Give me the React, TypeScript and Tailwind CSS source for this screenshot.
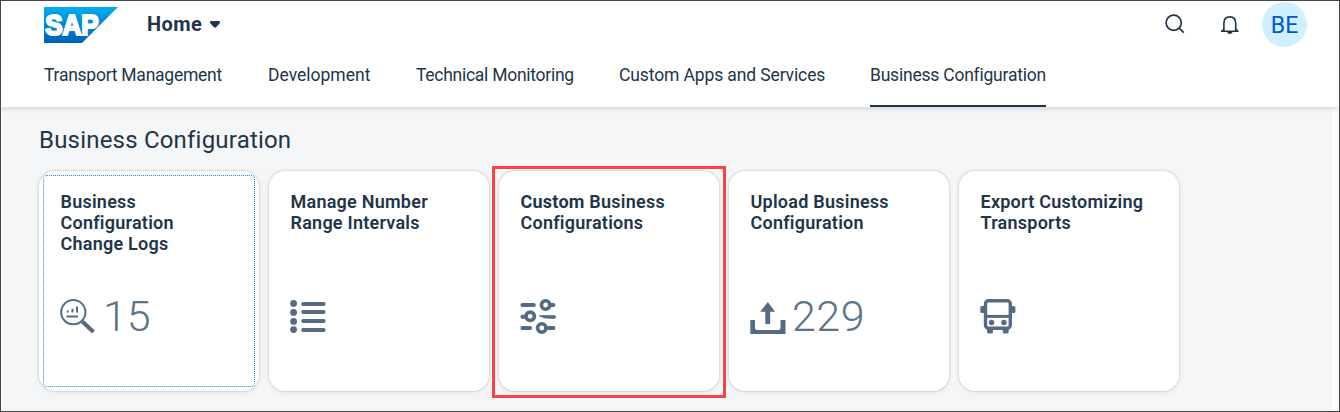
import type { ReactNode } from "react";

const tabs = [
  { label: "Transport Management", box: "w-[224px] tracking-[-0.25px]" },
  { label: "Development", box: "w-[148px] tracking-[0px]" },
  { label: "Technical Monitoring", box: "w-[203px] tracking-[-0.27px]" },
  { label: "Custom Apps and Services", box: "w-[251px] tracking-[-0.12px]" },
];

function SapLogo() {
  return (
    <svg width="74" height="37" viewBox="0 0 74 37" className="block">
      <defs>
        <linearGradient id="sap" x1="0" y1="0" x2="0" y2="1">
          <stop offset="0" stopColor="#00aeef" />
          <stop offset="0.5" stopColor="#0086d2" />
          <stop offset="1" stopColor="#0060b4" />
        </linearGradient>
      </defs>
      <path d="M0 0H74L38 36H0Z" fill="url(#sap)" />
      <text
        x="1.2"
        y="28.4"
        textLength="53.5"
        lengthAdjust="spacingAndGlyphs"
        fontFamily="Liberation Sans, sans-serif"
        fontWeight="700"
        fontSize="29.5"
        fill="#fff"
        stroke="#fff"
        strokeWidth="2.2"
      >
        SAP
      </text>
    </svg>
  );
}

function LogsIcon() {
  return (
    <svg width="36" height="36" viewBox="0 0 36 36" fill="none" stroke="#556b82" className="block">
      <circle cx="13.3" cy="13.2" r="12.1" strokeWidth="2" />
      <path d="M22.3 22.5L33.5 33" strokeWidth="4" />
      <path d="M6.5 17.4H18M7.8 13.6V11.5M12.5 13.6V9.8M17 13.6V7.5" strokeWidth="2" />
    </svg>
  );
}

function ListIcon() {
  return (
    <svg width="36" height="36" viewBox="0 0 36 36" fill="#556b82" className="block">
      {[4.4, 13.4, 22.4, 30.6].map((y) => (
        <circle key={y} cx="3.6" cy={y} r="3.4" />
      ))}
      {[4.9, 13, 21.9, 30.9].map((y) => (
        <rect key={y} x="11.2" y={y - 2} width="24.4" height="4" rx="2" />
      ))}
    </svg>
  );
}

function SlidersIcon() {
  return (
    <svg width="36" height="36" viewBox="0 0 36 36" fill="none" stroke="#556b82" strokeWidth="4" strokeLinecap="round" className="block">
      <path d="M2.4 6H13.8M30 6H33.4M2.4 17.7H5M2.4 29H10M27 29H33.4" />
      <path d="M20 16.6H34.2A1 1 0 0 1 34.2 19.4L25 19L20 17.3Z" fill="#556b82" strokeWidth="0.8" />
      <circle cx="25.6" cy="6" r="4.2" strokeWidth="3.6" />
      <circle cx="10.2" cy="17.3" r="4.2" strokeWidth="3.6" />
      <circle cx="21.8" cy="29" r="4.2" strokeWidth="3.6" />
    </svg>
  );
}

function UploadIcon() {
  return (
    <svg width="36" height="36" viewBox="0 0 36 36" fill="#556b82" className="block">
      <path d="M17.8 3L25.2 12.7H20.2V25H15.3V12.7H10.2Z" />
      <path d="M0.3 21H5V29.1Q5 31 7 31H28.6Q30.5 31 30.5 29.1V21H35.5V35H0.3Z" />
    </svg>
  );
}

function BusIcon() {
  return (
    <svg width="36" height="36" viewBox="0 0 36 36" fill="#556b82" className="block">
      <rect x="5.5" y="1.7" width="24.8" height="27.6" rx="3" fill="none" stroke="#556b82" strokeWidth="3.4" />
      <path d="M5 17.4H31" stroke="#556b82" strokeWidth="3" />
      <circle cx="11.6" cy="23.5" r="2.7" />
      <circle cx="23.9" cy="23.5" r="2.7" />
      <path d="M4 7H1.8Q0.3 7 0.3 8.5V12.5Q0.3 14 1.8 14H4ZM31.5 7H33.8Q35.4 7 35.4 8.5V12.5Q35.4 14 33.8 14H31.5Z" />
      <path d="M7 29.7H13V32.4Q13 34.6 11 34.6H9Q7 34.6 7 32.4ZM22.7 29.7H28.7V32.4Q28.7 34.6 26.7 34.6H24.7Q22.7 34.6 22.7 32.4Z" />
    </svg>
  );
}

type TileProps = {
  lines: ReactNode[];
  icon: ReactNode;
  count?: string;
  countClass?: string;
  focused?: boolean;
  highlighted?: boolean;
};

function Tile({ lines, icon, count, countClass, focused, highlighted }: TileProps) {
  return (
    <article className="relative h-[220px] w-[220px] rounded-[16px] bg-white pt-[20px] pl-[21px] shadow-[0_0_1.5px_1px_rgba(34,53,72,0.13),0_2px_7px_rgba(34,53,72,0.06)]">
      {focused && (
        <div className="absolute inset-[4px] rounded-[4px] border border-dotted border-[#1f80f0]" />
      )}
      {highlighted && (
        <div className="pointer-events-none absolute -top-[5px] -left-[7px] z-10 h-[232px] w-[234px] border-3 border-[#fb4141]" />
      )}
      <h2 className="h-[108px] pl-[0.5px] text-[18px] leading-[21px] font-semibold tracking-[0.24px] whitespace-nowrap text-[#223548]">
        {lines.map((line, i) => (
          <div key={i}>{line}</div>
        ))}
      </h2>
      <div className="flex h-[36px] items-center">
        {icon}
        {count && (
          <span className={`mb-[2px] text-[43px] leading-[34px] font-light text-[#5b738b] ${countClass}`}>
            {count}
          </span>
        )}
      </div>
    </article>
  );
}

export default function App() {
  return (
    <div className="flex h-[412px] w-[1340px] flex-col overflow-hidden border border-[#454547] bg-[#f5f6f7] font-[Roboto,sans-serif] text-[#223548]">
      <header className="relative z-10 h-[106px] shrink-0 bg-white shadow-[0_1px_5px_1px_rgba(34,53,72,0.16)]">
        <div className="flex h-[48px] pt-[1px] pl-[43px]">
          <div className="pt-[5px]">
            <SapLogo />
          </div>
          <div className="ml-[29px] flex h-[44px] items-center text-[20px] font-bold tracking-[0.4px]">
            <span className="w-[63px]">Home</span>
            <svg width="10" height="7" viewBox="0 0 10 7" fill="#223548" className="mt-[1px]">
              <path d="M1 0H9Q10 0 10 1.3Q10 2 9.3 2.8L6 6.3Q5 7.2 4 6.3L0.7 2.8Q0 2 0 1.3Q0 0 1 0Z" />
            </svg>
          </div>
          <div className="ml-auto flex pr-[32px]">
            <svg width="20" height="20" viewBox="0 0 20 20" fill="none" stroke="#223548" strokeWidth="1.7" strokeLinecap="round" className="mt-[12px] mr-[35px]">
              <circle cx="8.7" cy="8.7" r="7.6" />
              <path d="M14.2 14.2L18.3 18.2" />
            </svg>
            <svg width="20" height="20" viewBox="0 0 20 20" fill="none" stroke="#223548" className="mt-[13px] mr-[22px]">
              <path d="M3.9 15.8V8.5C3.9 4 6.3 1.9 9.8 1.9C13.3 1.9 15.7 4 15.7 8.5V15.8" strokeWidth="1.6" />
              <path d="M3.1 12.5V14L1 15.8V17H18.6V15.8L16.5 14V12.5L15 15.4H4.6Z" fill="#223548" stroke="none" />
              <path d="M7 16.8H12.7Q12 19 9.8 19Q7.6 19 7 16.8Z" fill="#223548" stroke="none" />
            </svg>
            <div className="flex h-[45px] w-[45px] items-center justify-center rounded-full bg-[#d1efff] pt-[3px] text-[23px] text-[#0057d2]">
              BE
            </div>
          </div>
        </div>
        <nav className="flex pl-[43px] text-[17.5px] leading-[52px]">
          {tabs.map((t) => (
            <span key={t.label} className={`whitespace-nowrap ${t.box}`}>
              {t.label}
            </span>
          ))}
          <span className="h-[58px] w-[176px] border-b-2 border-[#223548] tracking-[-0.22px] whitespace-nowrap">
            Business Configuration
          </span>
        </nav>
      </header>
      <main className="mr-[7px] flex-1 bg-[#f5f6f7] pl-[38px] shadow-[7px_0_0_#fdfdfd]">
        <h1 className="h-[64px] pt-[18px] text-[24px] leading-[30px] tracking-[0.2px]">
          Business Configuration
        </h1>
        <section className="flex gap-[10px]">
          <Tile focused lines={["Business", "Configuration", "Change Logs"]} icon={<LogsIcon />} count="15" countClass="ml-[7px]" />
          <Tile lines={["Manage Number", "Range Intervals"]} icon={<ListIcon />} />
          <Tile
            highlighted
            lines={[<><span className="font-bold">Custom</span> Business</>, "Configurations"]}
            icon={<SlidersIcon />}
          />
          <Tile lines={["Upload Business", "Configuration"]} icon={<UploadIcon />} count="229" countClass="ml-[6px] tracking-[0.5px]" />
          <Tile lines={["Export Customizing", "Transports"]} icon={<BusIcon />} />
        </section>
      </main>
    </div>
  );
}
